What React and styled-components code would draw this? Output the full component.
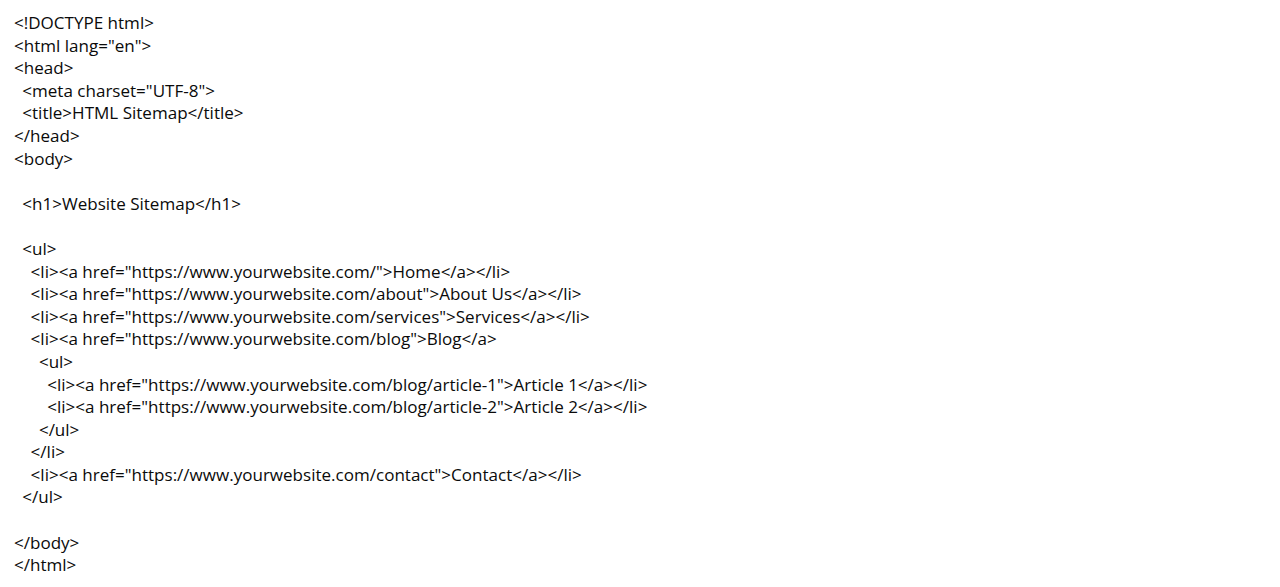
import React from 'react';
import styled, { createGlobalStyle } from 'styled-components';

const GlobalStyle = createGlobalStyle`
    html, body {
        margin: 0;
        padding: 0;
        background: #ffffff;
    }
`

const StyledPage = styled.div`
    width: 1280px;
    height: 587px;
    box-sizing: border-box;
    padding: 12px 0 0 14px;
    background: #ffffff;
    overflow: hidden;
`

const StyledLine = styled.div`
    height: 22.6px;
    line-height: 22.6px;
    padding-left: ${props => props.level * 8.3}px;
    font-family: "Open Sans", "Noto Sans", sans-serif;
    font-size: 17.05px;
    color: #0a0a0a;
    white-space: pre;
`

const lines = [
    [0, '<!DOCTYPE html>'],
    [0, '<html lang="en">'],
    [0, '<head>'],
    [1, '<meta charset="UTF-8">'],
    [1, '<title>HTML Sitemap</title>'],
    [0, '</head>'],
    [0, '<body>'],
    [0, ''],
    [1, '<h1>Website Sitemap</h1>'],
    [0, ''],
    [1, '<ul>'],
    [2, '<li><a href="https://www.yourwebsite.com/">Home</a></li>'],
    [2, '<li><a href="https://www.yourwebsite.com/about">About Us</a></li>'],
    [2, '<li><a href="https://www.yourwebsite.com/services">Services</a></li>'],
    [2, '<li><a href="https://www.yourwebsite.com/blog">Blog</a>'],
    [3, '<ul>'],
    [4, '<li><a href="https://www.yourwebsite.com/blog/article-1">Article 1</a></li>'],
    [4, '<li><a href="https://www.yourwebsite.com/blog/article-2">Article 2</a></li>'],
    [3, '</ul>'],
    [2, '</li>'],
    [2, '<li><a href="https://www.yourwebsite.com/contact">Contact</a></li>'],
    [1, '</ul>'],
    [0, ''],
    [0, '</body>'],
    [0, '</html>'],
]

function App() {
    return (
        <>
            <GlobalStyle />
            <StyledPage>
                {lines.map(([level, text], i) => (
                    <StyledLine key={i} level={level}>{text}</StyledLine>
                ))}
            </StyledPage>
        </>
    );
}

export default App;
